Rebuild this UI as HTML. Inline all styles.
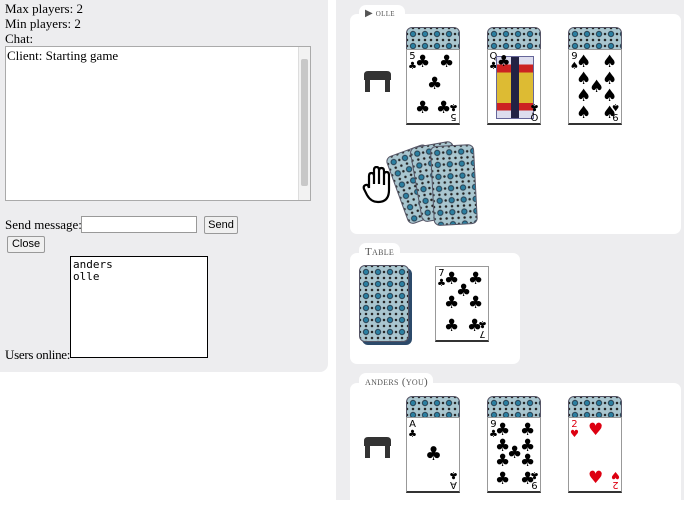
<!DOCTYPE html>
<html><head><style>
*{box-sizing:border-box}
body{margin:0;width:684px;height:500px;overflow:hidden;background:#fff;font-family:"Liberation Serif",serif;font-size:13px;color:#000;position:relative}
.abs{position:absolute}
#left{left:0;top:0;width:328px;height:372px;background:#ededef;border-bottom-right-radius:8px}
#right{left:336px;top:0;width:348px;height:500px;background:#ededef}
.box{position:absolute;background:#fff;border-radius:7px}
.tab{position:absolute;z-index:2;background:#fff;border-radius:7px 7px 0 0;font-size:11px;color:#555;font-variant:small-caps;padding:3px 6px 0;letter-spacing:.3px;white-space:nowrap;line-height:12px}
.back{position:absolute;border-radius:6px;background-color:#a9c6cf;
background-image:radial-gradient(circle at 50% 50%,#2c7fa0 0 2px,#123 2.5px,transparent 3.5px),radial-gradient(circle,#222 0 1px,transparent 1.5px);
background-size:12px 12px,6px 6px;background-position:0 0,3px 3px;border:1px solid #556}
.card{position:absolute;width:54px;height:76px;background:#fff;border:1px solid #999;border-bottom:2px solid #333;font-family:"DejaVu Sans",sans-serif;overflow:hidden}
.s{position:absolute;font-size:17px;line-height:1}
.i{position:absolute;font-size:10px;line-height:.95;text-align:center}
.red{color:#d01}
</style></head><body>
<div id="left" class="abs">
 <div class="abs" style="left:5px;top:1px;line-height:15px">Max players: 2<br>Min players: 2<br>Chat:</div>
 <div class="abs" style="left:5px;top:46px;width:306px;height:155px;background:#fff;border:1px solid #aaa;padding:1px 1px;line-height:15px">Client: Starting game
  <div class="abs" style="right:0;top:0;width:12px;height:153px;background:#f2f2f2;border-left:1px solid #ddd"><div style="margin:12px 2px;height:127px;background:#c8c8c8;border-radius:2px"></div></div></div>
 <div class="abs" style="left:5px;top:217px">Send message:</div>
 <div class="abs" style="left:81px;top:216px;width:116px;height:17px;background:#fff;border:1px solid #999"></div>
 <div class="abs" style="left:204px;top:216px;width:34px;height:18px;border:1px solid #999;border-radius:2px;background:#f0f0f0;font:11px 'Liberation Sans',sans-serif;text-align:center;line-height:16px">Send</div>
 <div class="abs" style="left:7px;top:236px;width:38px;height:17px;border:1px solid #999;border-radius:2px;background:#f0f0f0;font:11px 'Liberation Sans',sans-serif;text-align:center;line-height:15px">Close</div>
 <div class="abs" style="left:70px;top:256px;width:138px;height:102px;background:#fff;border:1px solid #000;font:11px 'DejaVu Sans Mono',monospace;line-height:12px;padding:2px 2px">anders<br>olle</div>
 <div class="abs" style="left:5px;top:347px;letter-spacing:-.3px">Users online:</div>
</div>
<div id="right" class="abs"></div>

<div class="box" style="left:350px;top:14px;width:331px;height:220px"></div>
<div class="box" style="left:350px;top:253px;width:170px;height:111px"></div>
<div class="box" style="left:350px;top:383px;width:331px;height:130px"></div>
<div class="tab" style="left:359px;top:5px;height:14px;width:46px;font-size:10px">▶ olle</div>
<div class="tab" style="left:359px;top:243px;height:14px;width:41px">Table</div>
<div class="tab" style="left:359px;top:373px;height:14px;width:74px">anders (you)</div>

<svg class="abs" style="left:364px;top:71px" width="27" height="21"><path d="M4 0h19q4 0 4 4v5H0V4q0-4 4-4z" fill="#333"/><rect x="1" y="8" width="5" height="13" fill="#333"/><rect x="21" y="8" width="5" height="13" fill="#333"/></svg>
<svg class="abs" style="left:364px;top:437px" width="27" height="21"><path d="M4 0h19q4 0 4 4v5H0V4q0-4 4-4z" fill="#333"/><rect x="1" y="8" width="5" height="13" fill="#333"/><rect x="21" y="8" width="5" height="13" fill="#333"/></svg>
<svg class="abs" style="left:362px;top:166px" width="30" height="38"><path d="M7 22V10q0-3 2.5-3T12 10v8V4q0-3 2.5-3T17 4v14V5q0-3 2.5-3T22 5v14-10q0-3 2.5-3T27 9v15q0 12-11 12Q9 36 5 29l-3-6q-1-3 1.5-4T7 22" fill="none" stroke="#000" stroke-width="2.2"/></svg>

<div class="back" style="left:406px;top:27px;width:54px;height:30px"></div>
<div class="back" style="left:487px;top:27px;width:54px;height:30px"></div>
<div class="back" style="left:568px;top:27px;width:54px;height:30px"></div>
<div class="card" style="left:406px;top:49px"><span class="i" style="left:1px;top:2px">5<br>♣</span><span class="s" style="left:8px;top:4px">♣</span><span class="s" style="left:32px;top:4px">♣</span><span class="s" style="left:20px;top:26px">♣</span><span class="s" style="left:8px;top:50px">♣</span><span class="s" style="left:29px;top:50px">♣</span><span class="i" style="right:1px;bottom:2px;transform:rotate(180deg)">5<br>♣</span></div>
<div class="card" style="left:487px;top:49px"><span class="i" style="left:1px;top:2px">Q<br>♣</span><div class="abs" style="left:8px;top:6px;width:38px;height:63px;border:1px solid #669;background:linear-gradient(180deg,#dde 0 12%,#c22 12% 25%,#db3 25% 50%,#db3 50% 75%,#c22 75% 88%,#dde 88%)"><div style="position:absolute;left:14px;top:0;width:8px;height:61px;background:#224"></div></div><span class="s" style="left:9px;top:4px;font-size:15px">♣</span><span class="i" style="right:1px;bottom:2px;transform:rotate(180deg)">Q<br>♣</span></div>
<div class="card" style="left:568px;top:49px"><span class="i" style="left:1px;top:2px">9<br>♠</span><span class="s" style="left:7px;top:4px">♠</span><span class="s" style="left:33px;top:4px">♠</span><span class="s" style="left:7px;top:21px">♠</span><span class="s" style="left:33px;top:21px">♠</span><span class="s" style="left:20px;top:29px">♠</span><span class="s" style="left:7px;top:38px">♠</span><span class="s" style="left:33px;top:38px">♠</span><span class="s" style="left:7px;top:55px">♠</span><span class="s" style="left:33px;top:55px">♠</span><span class="i" style="right:1px;bottom:2px;transform:rotate(180deg)">9<br>♠</span></div>

<div class="back" style="left:408px;top:146px;width:44px;height:72px;transform-origin:50% 100%;transform:rotate(-20deg)"></div>
<div class="back" style="left:422px;top:143px;width:44px;height:76px;transform-origin:50% 100%;transform:rotate(-10deg)"></div>
<div class="back" style="left:434px;top:145px;width:44px;height:80px;transform-origin:50% 100%;transform:rotate(-3deg)"></div>

<div class="abs" style="left:362px;top:268px;width:50px;height:77px;background:#2c4a6a;border-radius:6px"></div>
<div class="back" style="left:359px;top:265px;width:50px;height:77px"></div>
<div class="card" style="left:435px;top:266px"><span class="i" style="left:1px;top:2px">7<br>♣</span><span class="s" style="left:8px;top:4px">♣</span><span class="s" style="left:32px;top:4px">♣</span><span class="s" style="left:20px;top:16px">♣</span><span class="s" style="left:8px;top:28px">♣</span><span class="s" style="left:32px;top:28px">♣</span><span class="s" style="left:8px;top:51px">♣</span><span class="s" style="left:31px;top:51px">♣</span><span class="i" style="right:1px;bottom:2px;transform:rotate(180deg)">7<br>♣</span></div>

<div class="back" style="left:406px;top:396px;width:54px;height:30px"></div>
<div class="back" style="left:487px;top:396px;width:54px;height:30px"></div>
<div class="back" style="left:568px;top:396px;width:54px;height:30px"></div>
<div class="card" style="left:406px;top:417px"><span class="i" style="left:1px;top:2px">A<br>♣</span><span class="s" style="left:18px;top:27px;font-size:19px">♣</span><span class="i" style="right:1px;bottom:2px;transform:rotate(180deg)">A<br>♣</span></div>
<div class="card" style="left:487px;top:417px"><span class="i" style="left:1px;top:2px">9<br>♣</span><span class="s" style="left:7px;top:4px">♣</span><span class="s" style="left:32px;top:4px">♣</span><span class="s" style="left:7px;top:20px">♣</span><span class="s" style="left:32px;top:20px">♣</span><span class="s" style="left:19px;top:27px">♣</span><span class="s" style="left:7px;top:35px">♣</span><span class="s" style="left:32px;top:35px">♣</span><span class="s" style="left:7px;top:53px">♣</span><span class="s" style="left:32px;top:53px">♣</span><span class="i" style="right:1px;bottom:2px;transform:rotate(180deg)">9<br>♣</span></div>
<div class="card red" style="left:568px;top:417px"><span class="i" style="left:1px;top:2px">2<br>♥</span><span class="s" style="left:19px;top:4px">♥</span><span class="s" style="left:19px;top:52px">♥</span><span class="i" style="right:1px;bottom:2px;transform:rotate(180deg)">2<br>♥</span></div>
</body></html>
